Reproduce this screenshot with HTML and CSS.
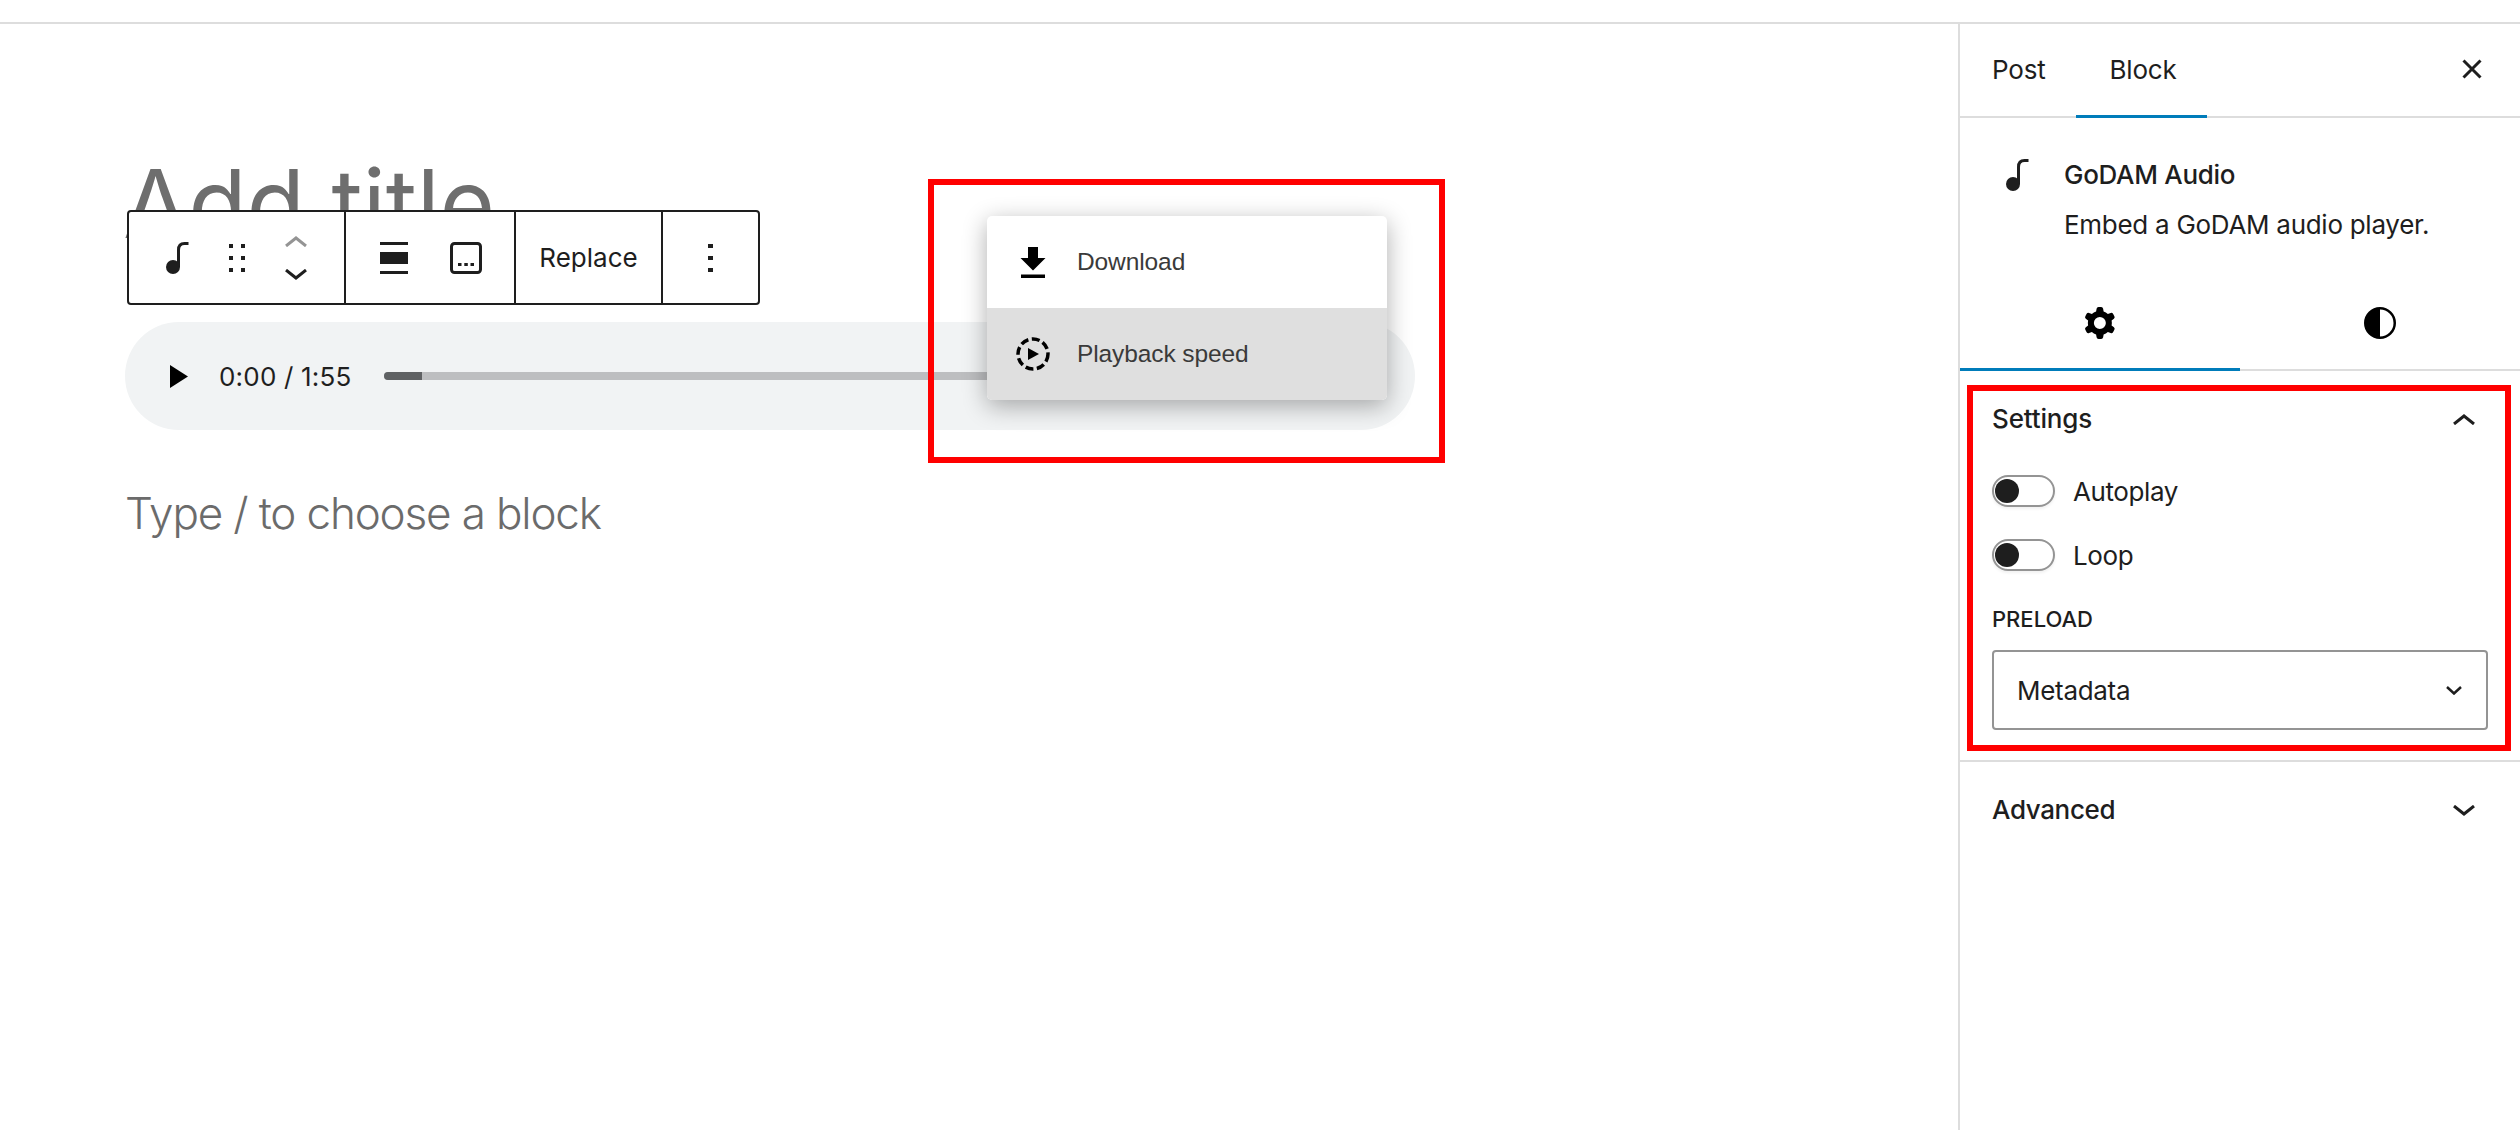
FILE: index.html
```html
<!DOCTYPE html>
<html lang="en">
<head>
<meta charset="utf-8">
<title>GoDAM Audio</title>
<link rel="stylesheet" href="styles.css">
</head>
<body>
<div class="app">
  <div class="topbar"></div>
  <div class="main">
    <main class="canvas">
      <h1 class="title">Add title</h1>
      <div class="player">
        <svg class="play" viewBox="0 0 18 23"><path d="M0 0l18 11.5L0 23z"/></svg>
        <span class="time">0:00 / 1:55</span>
        <div class="track"><div class="progress"></div></div>
        <div class="menu">
          <div class="menu-item">
            <svg class="menu-icon" viewBox="0 0 34 34"><path d="M12 2h10v11h7.500L17 25.500 4.500 13H12z M5 29.500h24v3.500H5z"/></svg>
            <span>Download</span>
          </div>
          <div class="menu-item hover">
            <svg class="menu-icon" viewBox="0 0 34 34"><circle class="dash" cx="17" cy="17" r="15"/><path d="M12 11l11 6-11 6z"/></svg>
            <span>Playback speed</span>
          </div>
        </div>
      </div>
      <p class="placeholder">Type / to choose a block</p>
    </main>
    <aside class="sidebar">
      <div class="tabs">
        <button class="tab">Post</button>
        <button class="tab active">Block</button>
        <button class="close"><svg viewBox="0 0 20 20"><path d="M1.500 1.500l17 17M18.500 1.500l-17 17"/></svg></button>
      </div>
      <div class="card">
        <svg class="note" viewBox="0 0 23 32"><ellipse cx="7" cy="25" rx="7" ry="7"/><path class="stem" d="M12.500 25V8c0-4 2-6.500 6-6.500h4"/></svg>
        <div class="card-text">
          <div class="card-title">GoDAM Audio</div>
          <div class="card-desc">Embed a GoDAM audio player.</div>
        </div>
      </div>
      <div class="subtabs">
        <div class="subtab active">
          <svg class="subicon" viewBox="0 0 24 24"><path fill-rule="evenodd" clip-rule="evenodd" d="M10.289 4.836A1 1 0 0111.275 4h1.306a1 1 0 01.987.836l.244 1.466c.787.26 1.503.679 2.108 1.218l1.393-.522a1 1 0 011.216.437l.653 1.13a1 1 0 01-.23 1.273l-1.148.944a6.025 6.025 0 010 2.435l1.149.946a1 1 0 01.23 1.272l-.653 1.13a1 1 0 01-1.216.437l-1.394-.522c-.605.54-1.32.958-2.108 1.218l-.244 1.466a1 1 0 01-.987.836h-1.306a1 1 0 01-.986-.836l-.244-1.466a5.995 5.995 0 01-2.108-1.218l-1.394.522a1 1 0 01-1.217-.436l-.653-1.131a1 1 0 01.23-1.272l1.149-.946a6.026 6.026 0 010-2.435l-1.148-.944a1 1 0 01-.23-1.272l.653-1.131a1 1 0 011.217-.437l1.393.522a5.994 5.994 0 012.108-1.218l.244-1.466zM14.929 12a3 3 0 11-6 0 3 3 0 016 0z"/></svg>
        </div>
        <div class="subtab">
          <svg class="subicon" viewBox="0 0 24 24"><path fill-rule="evenodd" d="M12 4a8 8 0 100 16 8 8 0 000-16zm0 14.750V5.250a6.750 6.750 0 010 13.500z"/></svg>
        </div>
      </div>
      <section class="panel">
        <div class="panel-head"><span>Settings</span><svg class="chev" viewBox="0 0 22 11"><path d="M1 10l10-8 10 8"/></svg></div>
        <div class="toggles">
          <div class="toggle-row"><span class="toggle"><span class="knob"></span></span><span>Autoplay</span></div>
          <div class="toggle-row"><span class="toggle"><span class="knob"></span></span><span>Loop</span></div>
        </div>
        <div class="field-label">PRELOAD</div>
        <div class="select"><span>Metadata</span><svg class="chev-small" viewBox="0 0 16 9"><path d="M1 1l7 6.500L15 1"/></svg></div>
      </section>
      <section class="panel-closed">
        <div class="panel-head advanced"><span>Advanced</span><svg class="chev" viewBox="0 0 22 11"><path d="M1 1l10 8 10-8"/></svg></div>
      </section>
    </aside>
  </div>

  <div class="toolbar">
    <div class="group g1">
      <div class="cell"><svg class="note" viewBox="0 0 23 32"><ellipse cx="7" cy="25" rx="7" ry="7"/><path class="stem" d="M12.500 25V8c0-4 2-6.500 6-6.500h4"/></svg></div>
      <div class="cell"><svg class="dots" viewBox="0 0 16 28"><path d="M0 0h4v4H0zM12 0h4v4h-4zM0 12h4v4H0zM12 12h4v4h-4zM0 24h4v4H0zM12 24h4v4h-4z"/></svg></div>
      <div class="cell mover">
        <svg class="mv up" viewBox="0 0 22 11"><path d="M1 10l10-8 10 8"/></svg>
        <svg class="mv" viewBox="0 0 22 11"><path d="M1 1l10 8 10-8"/></svg>
      </div>
    </div>
    <div class="group g2">
      <div class="cell"><svg class="align" viewBox="0 0 28 32"><path d="M0 0h28v3H0zM0 10h28v12H0zM0 29h28v3H0z"/></svg></div>
      <div class="cell"><svg class="caption" viewBox="0 0 32 32"><rect x="1.500" y="1.500" width="29" height="29" rx="3"/><path class="fill" d="M8 21h3.500v3H8zM14.300 21h3.500v3h-3.500zM20.500 21H24v3h-3.500z"/></svg></div>
    </div>
    <div class="group g3">Replace</div>
    <div class="group g4"><svg class="more" viewBox="0 0 6 28"><path d="M0 0h5v4H0zM0 12h5v4H0zM0 24h5v4H0z"/></svg></div>
  </div>

  <div class="annot annot-menu"></div>
  <div class="annot annot-settings"></div>
</div>
</body>
</html>
```

FILE: styles.css
```css
* { box-sizing: border-box; }
html, body { margin: 0; height: 100%; background: #fff; }
body { font-family: Inter, "Liberation Sans", sans-serif; font-size: 26px; color: #1e1e1e; overflow: hidden; }
svg { display: block; }

.app { position: relative; height: 1130px; display: flex; flex-direction: column; }
.topbar { height: 24px; flex: none; border-bottom: 2px solid #ddd; }
.main { flex: 1; display: flex; min-height: 0; }

/* canvas */
.canvas { flex: 1; padding-left: 125px; min-width: 0; }
.title { margin: 0 0 0 -2px; height: 298px; padding-top: 127px; font-size: 95px; line-height: 106px; font-weight: 400; color: #6e6e6e; }
.player { position: relative; width: 1290px; height: 108px; border-radius: 54px; background: #f1f3f4; display: flex; align-items: center; padding-left: 45px; }
.play { width: 18px; height: 23px; fill: #000; flex: none; }
.time { margin-left: 31px; font-size: 26px; letter-spacing: .2px; color: #1f1f1f; white-space: nowrap; }
.track { margin-left: 32px; width: 700px; height: 8px; border-radius: 4px; background: #bdbec0; overflow: hidden; }
.progress { width: 38px; height: 100%; background: #5f6163; }
.menu { position: absolute; left: 862px; top: -106px; width: 400px; background: #fff; border-radius: 5px; overflow: hidden; box-shadow: 0 6px 24px rgba(0, 0, 0, .32); }
.menu-item { height: 92px; display: flex; align-items: center; gap: 27px; padding-left: 29px; font-family: "Liberation Sans", Arial, sans-serif; font-size: 24.500px; letter-spacing: -.1px; color: #3a3a3a; }
.menu-item.hover { background: #dfdfdf; }
.menu-icon { width: 34px; height: 34px; fill: #000; flex: none; }
.dash { fill: none; stroke: #000; stroke-width: 3.500px; stroke-dasharray: 8 3.500; }
.placeholder { margin: 53px 0 0; font-size: 44px; line-height: 60px; font-weight: 300; letter-spacing: -1.150px; color: #6b6b6b; }

/* sidebar */
.sidebar { width: 562px; flex: none; border-left: 2px solid #ddd; display: flex; flex-direction: column; }
.tabs { height: 94px; flex: none; display: flex; align-items: stretch; padding-bottom: 2px; border-bottom: 2px solid #ddd; }
.tab { border: 0; background: none; padding: 0 30px 0 32px; font: inherit; letter-spacing: -.2px; color: #1e1e1e; }
.tab.active { margin-bottom: -4px; padding: 0 30px 4px 34px; box-shadow: inset 0 -3px 0 #007cba; }
.close { margin-left: auto; margin-right: 38px; border: 0; padding: 0; background: none; display: flex; align-items: center; }
.close svg { width: 20px; height: 20px; fill: none; stroke: #1e1e1e; stroke-width: 3px; }
.card { height: 157px; flex: none; display: flex; gap: 35px; padding: 41px 0 0 46px; }
.note { width: 23px; height: 32px; flex: none; fill: #1e1e1e; }
.note .stem { fill: none; stroke: #1e1e1e; stroke-width: 3px; }
.card-title { font-weight: 500; line-height: 32px; letter-spacing: -.3px; }
.card-desc { margin-top: 16px; line-height: 36px; letter-spacing: -.28px; }
.subtabs { height: 96px; flex: none; display: flex; border-bottom: 2px solid #ddd; }
.subtab { flex: 1; display: flex; align-items: center; justify-content: center; margin-bottom: -2px; }
.subtab.active { box-shadow: inset 0 -3px 0 #007cba; }
.subicon { width: 48px; height: 48px; fill: #000; }

.panel { flex: none; height: 391px; padding: 32px 32px 0 32px; border-bottom: 2px solid #ddd; }
.panel-closed { flex: none; padding: 32px 32px 0 32px; }
.panel-head { display: flex; justify-content: space-between; align-items: center; line-height: 32px; font-weight: 500; padding-right: 13px; letter-spacing: -.15px; }
.panel-head.advanced { letter-spacing: -.35px; }
.chev { width: 22px; height: 11px; fill: none; stroke: #1e1e1e; stroke-width: 3px; }
.toggles { margin-top: 40px; display: flex; flex-direction: column; gap: 32px; letter-spacing: -.4px; }
.toggle-row { display: flex; align-items: center; gap: 18px; height: 32px; }
.toggle { width: 63px; height: 32px; flex: none; border: 2px solid #949494; border-radius: 16px; padding: 2px 0 0 1px; box-shadow: 0 2px 3px rgba(0, 0, 0, .06); }
.knob { display: block; width: 24px; height: 24px; border-radius: 50%; background: #1e1e1e; }
.field-label { margin-top: 32px; font-size: 22px; line-height: 32px; font-weight: 500; }
.select { margin-top: 15px; height: 80px; border: 2px solid #949494; border-radius: 4px; display: flex; align-items: center; justify-content: space-between; padding: 0 24px 0 23px; letter-spacing: -.3px; }
.chev-small { width: 16px; height: 9px; fill: none; stroke: #1e1e1e; stroke-width: 2.500px; }

/* block toolbar */
.toolbar { position: absolute; left: 127px; top: 210px; height: 95px; display: flex; background: #fff; border: 2px solid #1e1e1e; border-radius: 4px; }
.group { display: flex; align-items: center; height: 100%; }
.group + .group { border-left: 2px solid #1e1e1e; }
.cell { display: flex; align-items: center; justify-content: center; flex-direction: column; }
.g1 { width: 215px; padding: 0 19px 0 19px; }
.g1 .cell { width: 59px; }
.g2 { width: 170px; padding: 0 12px 0 12px; }
.g2 .cell { width: 72px; }
.g3 { width: 147px; justify-content: center; font-size: 26px; }
.g4 { width: 97px; justify-content: center; }
.dots { width: 16px; height: 28px; fill: #1e1e1e; }
.mover { gap: 22px; }
.mv { width: 22px; height: 11px; fill: none; stroke: #1e1e1e; stroke-width: 3px; }
.mv.up { stroke: #949494; }
.align { width: 28px; height: 32px; fill: #1e1e1e; }
.caption { width: 32px; height: 32px; fill: none; stroke: #1e1e1e; stroke-width: 3px; }
.caption .fill { fill: #1e1e1e; stroke: none; }
.more { width: 6px; height: 28px; fill: #1e1e1e; }

/* annotation rectangles */
.annot { position: absolute; border: 6px solid #f00; pointer-events: none; }
.annot-menu { left: 928px; top: 179px; width: 517px; height: 284px; }
.annot-settings { left: 1967px; top: 385px; width: 544px; height: 366px; }
```
